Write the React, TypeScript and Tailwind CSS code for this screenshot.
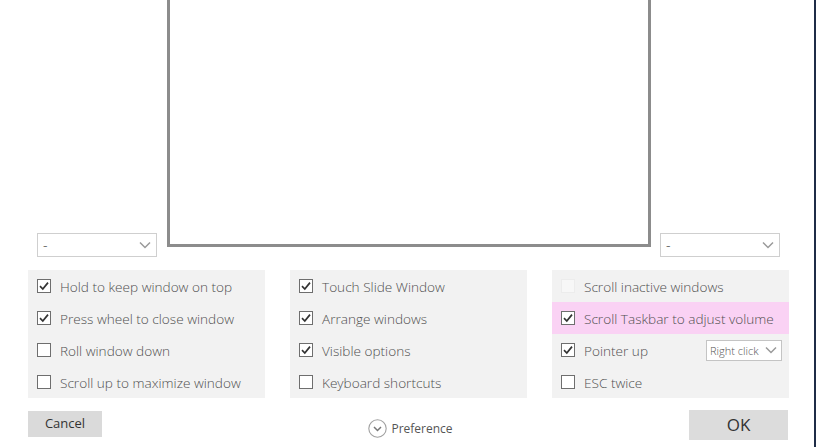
import React from "react";

const font = { fontFamily: '"Open Sans", "Noto Sans", sans-serif' };

function Chevron({ className = "" }: { className?: string }) {
  return (
    <svg width="12" height="8" viewBox="0 0 12 8" className={className}>
      <path d="M1 1.5 L6 6.5 L11 1.5" fill="none" stroke="#9a9a9a" strokeWidth="1.5" />
    </svg>
  );
}

function Box({ checked, disabled }: { checked: boolean; disabled?: boolean }) {
  return (
    <svg width="14" height="14" viewBox="0 0 14 14" className="shrink-0">
      <rect
        x="0.5"
        y="0.5"
        width="13"
        height="13"
        fill={disabled ? "#f7f7f7" : "#ffffff"}
        stroke={disabled ? "#ececec" : "#6e6e6e"}
        strokeWidth="1"
      />
      {checked && (
        <path d="M3 7.2 L5.8 10 L11 3.6" fill="none" stroke="#333333" strokeWidth="1.7" />
      )}
    </svg>
  );
}

function Row({
  label,
  checked,
  disabled,
  pink,
  extra,
}: {
  label: string;
  checked: boolean;
  disabled?: boolean;
  pink?: boolean;
  extra?: React.ReactNode;
}) {
  return (
    <div className={`flex h-[32px] items-center pl-[9px] pr-[7px] ${pink ? "bg-[#fad2f4]" : ""}`}>
      <Box checked={checked} disabled={disabled} />
      <span className="ml-[9px] pt-[2px] text-[13.6px] font-light leading-none text-[#505050]">{label}</span>
      {extra && <div className="ml-auto">{extra}</div>}
    </div>
  );
}

function Dropdown() {
  return (
    <div className="flex h-[24px] w-[120px] items-center justify-between border border-[#cfcfcf] bg-white pl-[5px] pr-[5px]">
      <span className="text-[14px] font-light leading-none text-[#444]">-</span>
      <Chevron />
    </div>
  );
}

export default function App() {
  return (
    <div className="flex h-[447px] w-[817px] overflow-hidden bg-white" style={font}>
      <div className="flex w-[814px] flex-col">
        <div className="flex h-[257px] items-start pl-[37px]">
          <div className="mt-[233px]">
            <Dropdown />
          </div>
          <div className="ml-[10px] h-[247px] w-[484px] border-x-[3px] border-b-[3px] border-[#8c8c8c] bg-white" />
          <div className="ml-[9px] mt-[233px]">
            <Dropdown />
          </div>
        </div>
        <div className="mt-[13px] flex gap-[25px] pl-[28px]">
          <div className="w-[237px] bg-[#f2f2f2]">
            <Row label="Hold to keep window on top" checked />
            <Row label="Press wheel to close window" checked />
            <Row label="Roll window down" checked={false} />
            <Row label="Scroll up to maximize window" checked={false} />
          </div>
          <div className="w-[237px] bg-[#f2f2f2]">
            <Row label="Touch Slide Window" checked />
            <Row label="Arrange windows" checked />
            <Row label="Visible options" checked />
            <Row label="Keyboard shortcuts" checked={false} />
          </div>
          <div className="w-[237px] bg-[#f2f2f2]">
            <Row label="Scroll inactive windows" checked={false} disabled />
            <Row label="Scroll Taskbar to adjust volume" checked pink />
            <Row
              label="Pointer up"
              checked
              extra={
                <div className="flex h-[21px] w-[76px] items-center justify-between border border-[#c4c4c4] bg-white pl-[3px] pr-[4px]">
                  <span className="text-[11px] font-light leading-none text-[#555]">Right click</span>
                  <Chevron />
                </div>
              }
            />
            <Row label="ESC twice" checked={false} />
          </div>
        </div>
        <div className="flex pl-[28px]">
          <div className="w-[237px] pt-[13px]">
            <div className="flex h-[26px] w-[74px] items-center justify-center bg-[#dadada] text-[13px] text-[#333]">
              Cancel
            </div>
          </div>
          <div className="ml-[25px] flex w-[237px] items-start justify-center pt-[21px]">
            <div className="flex items-center gap-[4px] pl-[4px]">
              <svg width="19" height="19" viewBox="0 0 19 19">
                <circle cx="9.5" cy="9.5" r="8.7" fill="#fff" stroke="#a0a0a0" strokeWidth="1.1" />
                <path d="M6 8 L9.5 11.5 L13 8" fill="none" stroke="#777" strokeWidth="1.5" />
              </svg>
              <span className="pt-[1px] text-[12px] leading-none text-[#555]">Preference</span>
            </div>
          </div>
          <div className="ml-[25px] flex w-[236px] justify-end pt-[12px]">
            <div className="flex h-[30px] w-[99px] items-center justify-center bg-[#dcdcdc] text-[17px] text-[#333]">
              OK
            </div>
          </div>
        </div>
      </div>
      <div className="h-full w-[2px] bg-[#1f2c47]" />
      <div className="h-full w-[1px] bg-white" />
    </div>
  );
}
